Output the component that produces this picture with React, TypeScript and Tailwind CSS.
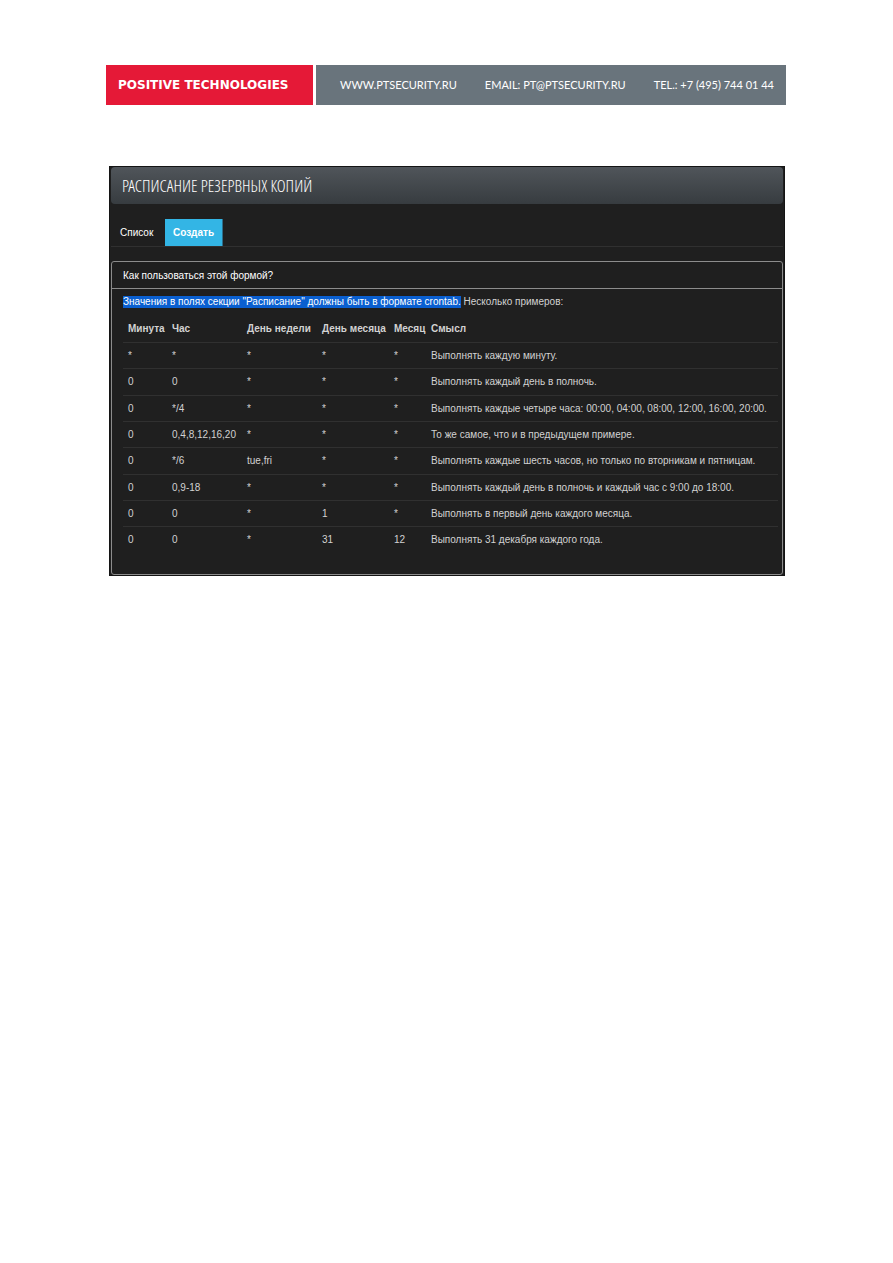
const columns = [
  { label: 'Минута', width: 'w-[44px]' },
  { label: 'Час', width: 'w-[75px]' },
  { label: 'День недели', width: 'w-[75px]' },
  { label: 'День месяца', width: 'w-[72px]' },
  { label: 'Месяц', width: 'w-[37px]' },
  { label: 'Смысл', width: 'w-auto' },
];

const rows = [
  ['*', '*', '*', '*', '*', 'Выполнять каждую минуту.'],
  ['0', '0', '*', '*', '*', 'Выполнять каждый день в полночь.'],
  ['0', '*/4', '*', '*', '*', 'Выполнять каждые четыре часа: 00:00, 04:00, 08:00, 12:00, 16:00, 20:00.'],
  ['0', '0,4,8,12,16,20', '*', '*', '*', 'То же самое, что и в предыдущем примере.'],
  ['0', '*/6', 'tue,fri', '*', '*', 'Выполнять каждые шесть часов, но только по вторникам и пятницам.'],
  ['0', '0,9-18', '*', '*', '*', 'Выполнять каждый день в полночь и каждый час с 9:00 до 18:00.'],
  ['0', '0', '*', '1', '*', 'Выполнять в первый день каждого месяца.'],
  ['0', '0', '*', '31', '12', 'Выполнять 31 декабря каждого года.'],
];

function Letterhead() {
  return (
    <header className="flex h-10 gap-[3px] text-white">
      <div className="flex w-[207px] shrink-0 items-center bg-[#e51937] pl-3 font-['DejaVu_Sans',sans-serif] text-[12px] font-bold whitespace-nowrap">
        POSITIVE TECHNOLOGIES
      </div>
      <div className="flex flex-1 items-center justify-between bg-[#69747c] pr-3 pl-6 font-['Lato',sans-serif] text-[11px] whitespace-nowrap">
        <a href="#site">WWW.PTSECURITY.RU</a>
        <a href="#email">EMAIL: PT@PTSECURITY.RU</a>
        <a href="#tel">TEL.: +7 (495) 744 01 44</a>
      </div>
    </header>
  );
}

function ScheduleTable() {
  return (
    <table className="mt-2 w-full table-fixed border-separate border-spacing-0 text-left leading-3 whitespace-nowrap">
      <thead>
        <tr className="h-[26px]">
          {columns.map((c) => (
            <th key={c.label} scope="col" className={`${c.width} pl-[5px] font-bold`}>
              {c.label}
            </th>
          ))}
        </tr>
      </thead>
      <tbody>
        {rows.map((row, i) => (
          <tr key={i} className="h-[26px] nth-[3n+2]:h-[27px]">
            {row.map((cell, j) => (
              <td key={j} className="border-t border-[#303030] pl-[5px]">
                {cell}
              </td>
            ))}
          </tr>
        ))}
      </tbody>
    </table>
  );
}

export default function App() {
  return (
    <div className="min-h-screen bg-white pt-[65px] pr-[107px] pl-[106px]">
      <Letterhead />
      <main className="mt-[61px] mr-px ml-[3px] border border-[#141414] bg-[#1f1f1f] px-px font-['Liberation_Sans',Arial,sans-serif] text-[10px] text-[#d2d2d2]">
        <h1 className="flex h-[37px] items-center rounded-sm bg-linear-to-b from-[#50555a] to-[#373c40] pl-[11px] font-['Open_Sans_Condensed_Light','Open_Sans_Light_Condensed','Roboto_Condensed_Light','Roboto_Condensed','Open_Sans_Condensed',sans-serif] text-[17px] leading-5 font-light whitespace-nowrap text-white">
          РАСПИСАНИЕ РЕЗЕРВНЫХ КОПИЙ
        </h1>
        <nav className="mt-[15px] flex h-7 border-b border-[#303030] text-white">
          <a href="#list" className="flex w-[54px] items-center pl-[9px]">
            Список
          </a>
          <a href="#create" className="flex w-[58px] items-center justify-center border-r border-[#2c6f8c] bg-[#33b5e5] font-bold">
            Создать
          </a>
        </nav>
        <section className="mt-[14px] rounded-[3px] border border-[#8c8c8c] pb-[21px]">
          <h2 className="flex h-[27px] items-center border-b border-[#8c8c8c] pl-[11px] text-white">
            Как пользоваться этой формой?
          </h2>
          <div className="pt-[7px] pr-1 pl-[11px]">
            <p className="leading-3">
              <mark className="inline-block bg-[#0a5fd0] text-white">
                Значения в полях секции "Расписание" должны быть в формате crontab.
              </mark>{' '}
              Несколько примеров:
            </p>
            <ScheduleTable />
          </div>
        </section>
      </main>
    </div>
  );
}
